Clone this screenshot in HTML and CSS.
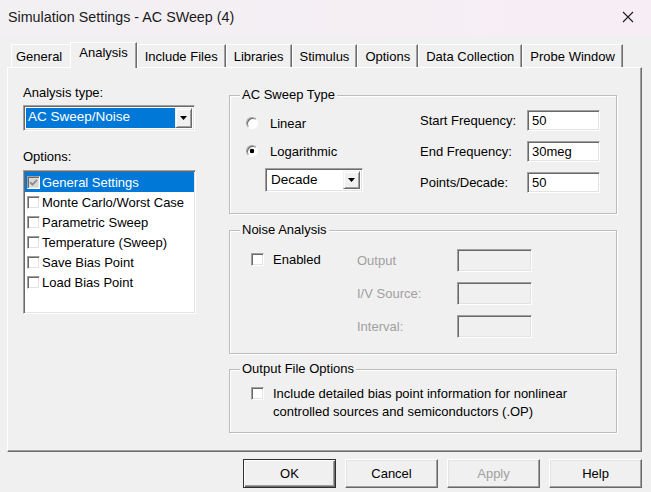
FILE: index.html
```html
<!DOCTYPE html>
<html>
<head>
<meta charset="utf-8">
<title>Simulation Settings</title>
<link rel="stylesheet" href="styles.css">
</head>
<body>
<div class="titlebar">
  <span class="title">Simulation Settings - AC SWeep (4)</span>
  <svg class="close" width="12" height="12" viewBox="0 0 12 12"><path d="M1 1L11 11M11 1L1 11" stroke="#1c1c1c" stroke-width="1.1" fill="none"/></svg>
</div>
<div class="tabs">
  <div class="tab first">General</div>
  <div class="tab active">Analysis</div>
  <div class="tab">Include Files</div>
  <div class="tab">Libraries</div>
  <div class="tab">Stimulus</div>
  <div class="tab">Options</div>
  <div class="tab">Data Collection</div>
  <div class="tab">Probe Window</div>
</div>
<div class="panel">
  <div class="left">
    <div class="lbl">Analysis type:</div>
    <div class="combo wide sunken">
      <div class="combo-field sel">AC Sweep/Noise</div>
      <div class="combo-btn"><svg width="7" height="4" viewBox="0 0 7 4"><path d="M0 0H7L3.5 4Z" fill="#000"/></svg></div>
    </div>
    <div class="lbl options-lbl">Options:</div>
    <div class="listbox sunken">
      <div class="item sel"><span class="chk sunken checked"><svg width="9" height="9" viewBox="0 0 9 9"><path d="M1 4.2L3.4 6.6L8 1.8" stroke="#8c8c8c" stroke-width="1.8" fill="none"/></svg></span><span class="item-text">General Settings</span></div>
      <div class="item"><span class="chk sunken"></span><span class="item-text">Monte Carlo/Worst Case</span></div>
      <div class="item"><span class="chk sunken"></span><span class="item-text">Parametric Sweep</span></div>
      <div class="item"><span class="chk sunken"></span><span class="item-text">Temperature (Sweep)</span></div>
      <div class="item"><span class="chk sunken"></span><span class="item-text">Save Bias Point</span></div>
      <div class="item"><span class="chk sunken"></span><span class="item-text">Load Bias Point</span></div>
    </div>
  </div>
  <div class="right">
    <div class="group sweep">
      <span class="legend">AC Sweep Type</span>
      <div class="sweep-left">
        <div class="radio-row"><span class="radio"></span><span>Linear</span></div>
        <div class="radio-row second"><span class="radio on"></span><span>Logarithmic</span></div>
        <div class="combo small sunken">
          <div class="combo-field">Decade</div>
          <div class="combo-btn"><svg width="7" height="4" viewBox="0 0 7 4"><path d="M0 0H7L3.5 4Z" fill="#000"/></svg></div>
        </div>
      </div>
      <div class="sweep-right">
        <span>Start Frequency:</span><span class="field sunken">50</span>
        <span>End Frequency:</span><span class="field sunken">30meg</span>
        <span>Points/Decade:</span><span class="field sunken">50</span>
      </div>
    </div>
    <div class="group noise">
      <span class="legend">Noise Analysis</span>
      <div class="noise-left">
        <div class="check-row"><span class="chk sunken"></span><span>Enabled</span></div>
      </div>
      <div class="noise-grid">
        <span class="dis">Output</span><span class="field sunken off"></span>
        <span class="dis">I/V Source:</span><span class="field sunken off"></span>
        <span class="dis">Interval:</span><span class="field sunken off"></span>
      </div>
    </div>
    <div class="group output">
      <span class="legend">Output File Options</span>
      <span class="chk sunken"></span>
      <span class="out-text">Include detailed bias point information for nonlinear<br>controlled sources and semiconductors (.OP)</span>
    </div>
  </div>
</div>
<div class="buttons">
  <div class="btn default">OK</div>
  <div class="btn">Cancel</div>
  <div class="btn disabled">Apply</div>
  <div class="btn">Help</div>
</div>
</body>
</html>
```

FILE: styles.css
```css
* { box-sizing: border-box; }
html, body { margin: 0; padding: 0; }
body {
  width: 651px;
  height: 492px;
  overflow: hidden;
  background: #f0f0f0;
  font-family: "Liberation Sans", Arial, sans-serif;
  font-size: 13px;
  color: #000;
}

/* title bar */
.titlebar {
  height: 36px;
  display: flex;
  align-items: center;
  justify-content: space-between;
  padding: 0 17px 0 8px;
  background: linear-gradient(90deg, #f2f0f3 0%, #f5eff4 60%, #f7eef5 100%);
}
.title {
  font-size: 14.3px;
  line-height: 18px;
  color: #1a1a1a;
  margin-top: -2px;
}
.close { margin-top: -2px; }

/* tabs */
.tabs {
  display: flex;
  align-items: flex-end;
  height: 25px;
  margin: 6px 0 0 11px;
}
.tab {
  height: 23px;
  padding: 4px 7px 0;
  line-height: 16px;
  white-space: nowrap;
  border-top: 1px solid #fff;
  border-left: 1px solid #fff;
  border-right: 1px solid #6d6d6d;
  box-shadow: inset -1px 0 0 #a0a0a0;
}
.tab.first {
  padding-left: 4px;
  padding-right: 8px;
  border-right: none;
  box-shadow: none;
}
.tab.active {
  position: relative;
  z-index: 1;
  height: 26px;
  margin-bottom: -1px;
  padding: 2px 8px 0;
  background: #f0f0f0;
}

/* panel */
.panel {
  display: flex;
  width: 635px;
  height: 385px;
  margin-left: 7px;
  border-top: 1px solid #fff;
  border-left: 1px solid #fff;
  border-right: 1px solid #6d6d6d;
  border-bottom: 1px solid #6d6d6d;
  box-shadow: inset -1px -1px 0 #a0a0a0;
}

.sunken {
  border: 1px solid;
  border-color: #a0a0a0 #fff #fff #a0a0a0;
  box-shadow: inset 1px 1px 0 #696969, inset -1px -1px 0 #e3e3e3;
}

.left {
  width: 173px;
  margin-left: 15px;
  padding-top: 17px;
  display: flex;
  flex-direction: column;
}
.lbl { line-height: 16px; }
.options-lbl { margin-top: 18px; }

/* combo */
.combo {
  display: flex;
  padding: 2px;
  background: #fff;
}
.combo.wide { width: 172px; height: 26px; margin-top: 4px; }
.combo.small { width: 98px; height: 24px; margin-top: 7px; margin-left: 19px; }
.combo-field {
  flex: 1;
  line-height: 18px;
  padding-left: 2px;
  white-space: nowrap;
  font-size: 13.5px;
}
.combo-field.sel { background: #0078d7; color: #fff; }
.combo.small .combo-field { line-height: 18px; padding-left: 3px; }
.combo-btn {
  width: 17px;
  display: flex;
  align-items: center;
  justify-content: center;
  background: #f0f0f0;
  border: 1px solid;
  border-color: #f0f0f0 #696969 #696969 #f0f0f0;
  box-shadow: inset 1px 1px 0 #fff, inset -1px -1px 0 #a0a0a0;
}

/* listbox */
.listbox {
  width: 173px;
  height: 144px;
  margin-top: 5px;
  padding: 1px;
  background: #fff;
}
.item {
  height: 20px;
  display: flex;
  align-items: center;
  padding-left: 2px;
  white-space: nowrap;
}
.item.sel { background: #0078d7; color: #fff; }
.item-text { margin-left: 2px; }

.chk {
  width: 13px;
  height: 13px;
  flex: none;
  background: #fff;
  display: flex;
  align-items: center;
  justify-content: center;
}
.chk.checked { background: #d8d8d8; }

/* right side groups */
.right {
  width: 388px;
  margin-left: 33px;
  padding-top: 27px;
  display: flex;
  flex-direction: column;
}
.group {
  position: relative;
  width: 388px;
  border: 1px solid #bcbcbc;
  box-shadow: inset 1px 1px 0 #fff, 1px 1px 0 #fff;
}
.legend {
  position: absolute;
  top: -9px;
  left: 10px;
  padding: 0 2px;
  line-height: 16px;
  background: #f0f0f0;
  white-space: nowrap;
}

.sweep { height: 119px; display: flex; }
.sweep-left { padding: 17px 0 0 16px; display: flex; flex-direction: column; }
.radio-row { height: 20px; display: flex; align-items: center; gap: 12px; }
.radio-row.second { margin-top: 8px; }
.radio {
  width: 12px;
  height: 12px;
  border-radius: 50%;
  border: 1px solid;
  border-color: #a0a0a0 #fff #fff #a0a0a0;
  box-shadow: inset 1px 1px 0 #696969;
  background: #fff;
}
.radio.on { background: radial-gradient(circle, #000 0 2px, #fff 2.6px); }

.sweep-right {
  margin: 14px 16px 0 auto;
  display: grid;
  grid-template-columns: 107px 73px;
  grid-auto-rows: 21px;
  row-gap: 10px;
  align-items: center;
  white-space: nowrap;
}
.field {
  height: 100%;
  background: #fff;
  padding-left: 4px;
  line-height: 19px;
}
.field.off { background: #f0f0f0; }

.noise { height: 124px; margin-top: 16px; display: flex; }
.noise-left { width: 127px; padding: 20px 0 0 21px; }
.check-row { height: 16px; display: flex; align-items: center; gap: 9px; }
.noise-grid {
  margin-top: 18px;
  display: grid;
  grid-template-columns: 100px 75px;
  grid-auto-rows: 23px;
  row-gap: 10px;
  align-items: center;
  white-space: nowrap;
}
.dis { color: #a0a0a0; }

.output {
  height: 64px;
  margin-top: 15px;
  display: flex;
  align-items: flex-start;
  padding: 15px 0 0 21px;
}
.output .chk { margin-top: 2px; }
.out-text { margin-left: 9px; line-height: 18px; }

/* buttons */
.buttons {
  display: flex;
  justify-content: flex-end;
  gap: 9px;
  padding-right: 9px;
  margin-top: 7px;
}
.btn {
  width: 93px;
  height: 29px;
  display: flex;
  align-items: center;
  justify-content: center;
  background: #f0f0f0;
  border: 1px solid;
  border-color: #fff #696969 #696969 #fff;
  box-shadow: inset -1px -1px 0 #a0a0a0, inset 1px 1px 0 #e3e3e3;
}
.btn.default {
  border-color: #303030;
  box-shadow: inset 1px 1px 0 #fff, inset -1px -1px 0 #696969, inset -2px -2px 0 #a0a0a0;
}
.btn.disabled { color: #a0a0a0; }
```
